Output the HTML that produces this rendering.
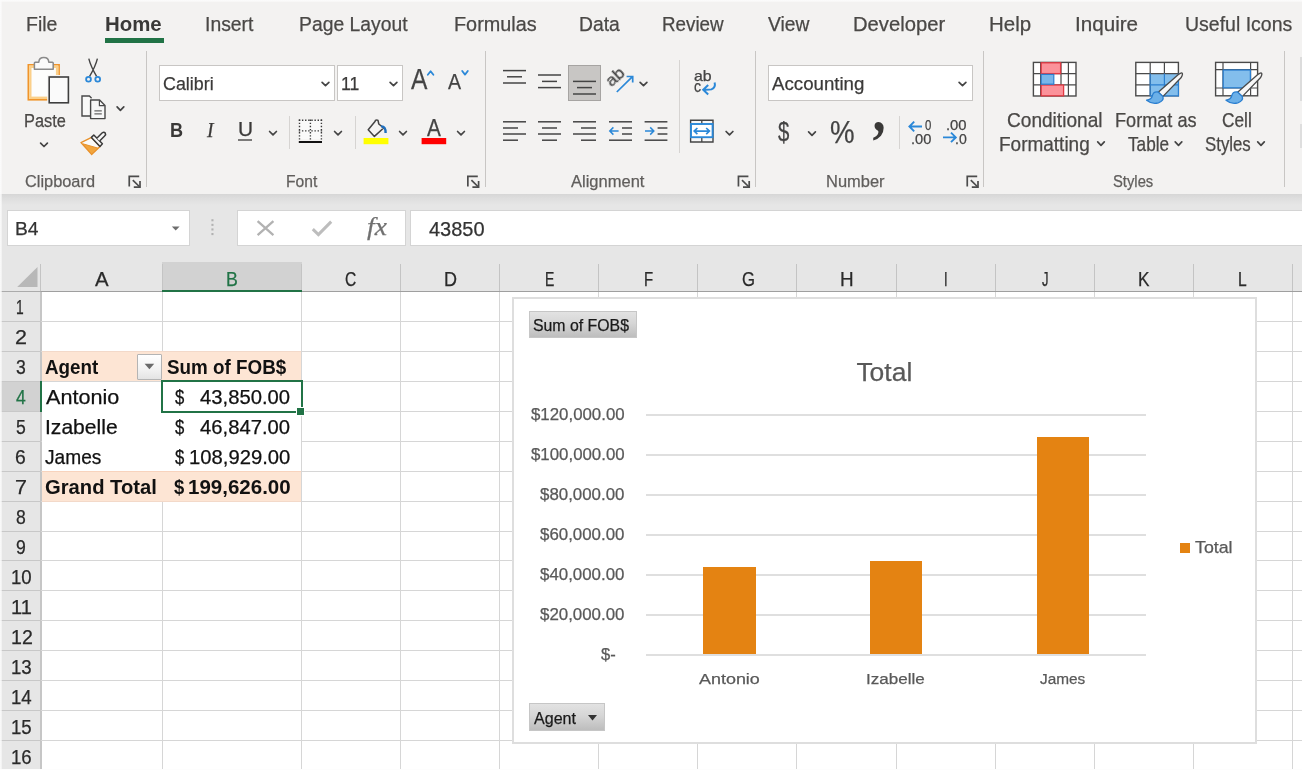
<!DOCTYPE html>
<html lang="en"><head><meta charset="utf-8"><title>Excel - PivotChart</title>
<style>
html,body{margin:0;padding:0}
body{width:1302px;height:770px;position:relative;overflow:hidden;background:#fff;font-family:"Liberation Sans",sans-serif}
div,span,svg{position:absolute;box-sizing:border-box}
.t{line-height:1;white-space:pre;transform-origin:0 0;-webkit-text-stroke:0.25px currentColor}
#ribbon{left:0;top:0;width:1302px;height:194px;background:#f3f2f1}
#txt{left:0;top:0;width:1302px;height:770px;will-change:transform}
#rshadow{left:0;top:194px;width:1302px;height:11px;background:linear-gradient(#d6d6d6,#dedede 40%,#e6e6e6)}
#fbar{left:0;top:205px;width:1302px;height:57px;background:#e6e6e6}
.gsep{width:1px;top:51px;height:136px;background:#c8c6c4}
.isep{width:1px;background:#d6d4d2}
.box{background:#fff;border:1px solid #c8c6c4}
.fbox{background:#fff;border:1px solid #d4d4d4}
#hdr{left:0;top:262px;width:1302px;height:29px;background:#e6e6e6}
#rowhdr{left:0;top:291px;width:41px;height:479px;background:#e6e6e6}
.vl{width:1px;background:#d6d6d6}
.hl{height:1px;background:#d6d6d6}
.hvl{width:1px;background:#c4c4c4;top:264px;height:27px}
.rhl{height:1px;background:#c8c8c8;left:0;width:41px}
#chart{left:512px;top:297px;width:745px;height:447px;background:#fff;border:2px solid #dedede}
.pbtn{background:linear-gradient(#e2e2e2,#d6d6d6 45%,#bdbdbd);border:1px solid #c6c6c6}
.bar{background:#e48312}
.cgl{height:2px;background:#dfdfdf;left:646px;width:500.4px}

</style></head>
<body>
<div id="ribbon"></div>
<div id="rshadow"></div>
<div id="fbar"></div>
<div style="left:0;top:0;width:1302px;height:2px;background:linear-gradient(#fcfcfc,#f7f6f5)"></div>
<div style="left:0;top:0;width:2px;height:770px;background:linear-gradient(90deg,#fbfbfb,rgba(250,250,250,0.5));z-index:5"></div>
<!-- active tab underline -->
<div style="left:104.5px;top:37.6px;width:59px;height:5.2px;background:#217346"></div>
<!-- group separators -->
<div class="gsep" style="left:146px"></div>
<div class="gsep" style="left:485px"></div>
<div class="gsep" style="left:755px"></div>
<div class="gsep" style="left:983px"></div>
<div class="gsep" style="left:1284px"></div>
<!-- inner separators -->
<div class="isep" style="left:289px;top:116px;height:33px"></div>
<div class="isep" style="left:355px;top:116px;height:33px"></div>
<div class="isep" style="left:679px;top:60px;height:93px"></div>
<div class="isep" style="left:899px;top:116px;height:33px"></div>
<!-- combo boxes -->
<div class="box" style="left:159px;top:65px;width:176px;height:36px"></div>
<div class="box" style="left:337px;top:65px;width:66px;height:36px"></div>
<div class="box" style="left:768px;top:65px;width:205px;height:36px"></div>
<!-- selected bottom-align button -->
<div style="left:568px;top:65px;width:33px;height:36px;background:#c8c6c4;border:1px solid #a6a4a2"></div>
<!-- formula bar boxes -->
<div class="fbox" style="left:7px;top:210px;width:183px;height:36px"></div>
<div class="fbox" style="left:237px;top:210px;width:169px;height:36px"></div>
<div class="fbox" style="left:410px;top:210px;width:900px;height:36px"></div>
<span class="t" style="will-change:transform;left:612.4px;top:87.6px;font-size:17.4px;color:#444;transform:rotate(-42deg) translate(0,-0.85em)">ab</span>
<div style="left:1300px;top:57px;width:2px;height:44px;background:#dcdcdc"></div>
<div style="left:1300px;top:124px;width:2px;height:24px;background:#dedede"></div>

<div id="hdr"></div>
<div id="rowhdr"></div>
<div style="left:162px;top:262px;width:140px;height:29px;background:#d2d2d2"></div>
<div style="left:0;top:382px;width:41px;height:29px;background:#d2d2d2"></div>
<div style="left:0;top:291px;width:1302px;height:1px;background:#ababab"></div>
<div style="left:41px;top:291px;width:1261px;height:1px;background:#9f9f9f"></div>
<div class="hvl" style="left:40px"></div>
<div class="hvl" style="left:162px"></div>
<div class="hvl" style="left:301px"></div>
<div class="hvl" style="left:400px"></div>
<div class="hvl" style="left:499px"></div>
<div class="hvl" style="left:598px"></div>
<div class="hvl" style="left:697px"></div>
<div class="hvl" style="left:796px"></div>
<div class="hvl" style="left:896px"></div>
<div class="hvl" style="left:995px"></div>
<div class="hvl" style="left:1094px"></div>
<div class="hvl" style="left:1193px"></div>
<div class="hvl" style="left:1292px"></div>
<div style="left:40px;top:292px;width:2px;height:478px;background:#c6c6c6"></div>
<div style="left:42px;top:352px;width:260px;height:29px;background:#fde5d4"></div>
<div style="left:42px;top:471px;width:260px;height:30px;background:#fde5d4"></div>
<div class="vl" style="left:162px;top:292px;height:478px"></div>
<div class="vl" style="left:301px;top:292px;height:478px"></div>
<div class="vl" style="left:400px;top:292px;height:478px"></div>
<div class="vl" style="left:499px;top:292px;height:478px"></div>
<div class="vl" style="left:598px;top:292px;height:478px"></div>
<div class="vl" style="left:697px;top:292px;height:478px"></div>
<div class="vl" style="left:796px;top:292px;height:478px"></div>
<div class="vl" style="left:896px;top:292px;height:478px"></div>
<div class="vl" style="left:995px;top:292px;height:478px"></div>
<div class="vl" style="left:1094px;top:292px;height:478px"></div>
<div class="vl" style="left:1193px;top:292px;height:478px"></div>
<div class="vl" style="left:1292px;top:292px;height:478px"></div>
<div class="hl" style="left:41px;top:321px;width:1261px"></div>
<div class="rhl" style="top:321px"></div>
<div class="hl" style="left:41px;top:351px;width:1261px"></div>
<div class="rhl" style="top:351px"></div>
<div class="hl" style="left:41px;top:381px;width:1261px"></div>
<div class="rhl" style="top:381px"></div>
<div class="hl" style="left:41px;top:411px;width:1261px"></div>
<div class="rhl" style="top:411px"></div>
<div class="hl" style="left:41px;top:441px;width:1261px"></div>
<div class="rhl" style="top:441px"></div>
<div class="hl" style="left:41px;top:471px;width:1261px"></div>
<div class="rhl" style="top:471px"></div>
<div class="hl" style="left:41px;top:501px;width:1261px"></div>
<div class="rhl" style="top:501px"></div>
<div class="hl" style="left:41px;top:531px;width:1261px"></div>
<div class="rhl" style="top:531px"></div>
<div class="hl" style="left:41px;top:560px;width:1261px"></div>
<div class="rhl" style="top:560px"></div>
<div class="hl" style="left:41px;top:590px;width:1261px"></div>
<div class="rhl" style="top:590px"></div>
<div class="hl" style="left:41px;top:620px;width:1261px"></div>
<div class="rhl" style="top:620px"></div>
<div class="hl" style="left:41px;top:650px;width:1261px"></div>
<div class="rhl" style="top:650px"></div>
<div class="hl" style="left:41px;top:680px;width:1261px"></div>
<div class="rhl" style="top:680px"></div>
<div class="hl" style="left:41px;top:710px;width:1261px"></div>
<div class="rhl" style="top:710px"></div>
<div class="hl" style="left:41px;top:740px;width:1261px"></div>
<div class="rhl" style="top:740px"></div>
<div class="hl" style="left:41px;top:770px;width:1261px"></div>
<div class="rhl" style="top:770px"></div>
<div style="left:42px;top:352px;width:259px;height:29px;background:#fde5d4"></div>
<div style="left:42px;top:472px;width:259px;height:29px;background:#fde5d4"></div>
<div style="left:42px;top:471px;width:259px;height:1px;background:#f8d3bd"></div>
<div style="left:42px;top:351px;width:259px;height:1px;background:#f3d9c9"></div>
<div style="left:42px;top:501px;width:259px;height:1px;background:#f3d9c9"></div>
<div style="left:42px;top:382px;width:259px;height:89px;background:#fff"></div>
<div style="left:162px;top:289.6px;width:140px;height:2px;background:#217346"></div>
<div style="left:39.6px;top:381px;width:2px;height:31px;background:#217346"></div>
<div style="left:137px;top:354px;width:25px;height:26px;background:linear-gradient(#ffffff,#f2f2f2 60%,#e4e4e4);border:1px solid #b4b4b4;border-radius:1px"></div>
<svg style="left:144px;top:363px" width="11" height="7" viewBox="0 0 11 7"><path d="M0.6 0.8h9.6l-4.8 5.4z" fill="#6a6a6a"/></svg>
<div style="left:161px;top:380px;width:142.4px;height:33px;border:2px solid #217346"></div>
<div style="left:296px;top:407px;width:9px;height:9px;background:#fff"></div>
<div style="left:297.4px;top:408.4px;width:6.4px;height:6.4px;background:#217346"></div>
<svg style="left:16px;top:266px" width="23" height="22" viewBox="0 0 23 22"><path d="M21.5 1v20H1.2z" fill="#b8b8b8"/></svg>
<div id="chart"></div>
<div class="pbtn" style="left:529px;top:310.5px;width:107.5px;height:27.5px"></div>
<div class="pbtn" style="left:529px;top:703px;width:76px;height:27.6px"></div>
<svg style="left:587px;top:714px" width="11" height="7" viewBox="0 0 11 7"><path d="M1 1h9l-4.5 5.4z" fill="#333"/></svg>
<div class="cgl" style="top:414.0px"></div>
<div class="cgl" style="top:454.0px"></div>
<div class="cgl" style="top:494.0px"></div>
<div class="cgl" style="top:534.0px"></div>
<div class="cgl" style="top:574.0px"></div>
<div class="cgl" style="top:614.0px"></div>
<div class="cgl" style="top:654.0px"></div>
<div class="bar" style="left:703.0px;top:566.7px;width:52.6px;height:87.7px"></div>
<div class="bar" style="left:869.7px;top:560.7px;width:52.6px;height:93.7px"></div>
<div class="bar" style="left:1036.6px;top:436.5px;width:52.6px;height:217.9px"></div>
<div class="bar" style="left:1179.6px;top:542.6px;width:10.4px;height:10.4px"></div>
<div style="left:0;top:769px;width:1302px;height:1px;background:#fdfdfd;z-index:6"></div>
<svg style="left:0;top:0" width="1302" height="770" viewBox="0 0 1302 770">
<path d="M40.6 143.1L44.0 146.5L47.4 143.1" fill="none" stroke="#444" stroke-width="1.7" stroke-linecap="round" stroke-linejoin="round"/>
<path d="M117.1 106.9L120.4 110.3L123.8 106.9" fill="none" stroke="#444" stroke-width="1.7" stroke-linecap="round" stroke-linejoin="round"/>
<path d="M322.1 82.3L325.5 85.7L328.9 82.3" fill="none" stroke="#444" stroke-width="1.7" stroke-linecap="round" stroke-linejoin="round"/>
<path d="M390.1 82.3L393.5 85.7L396.9 82.3" fill="none" stroke="#444" stroke-width="1.7" stroke-linecap="round" stroke-linejoin="round"/>
<path d="M269.6 131.5L273.0 134.9L276.4 131.5" fill="none" stroke="#444" stroke-width="1.7" stroke-linecap="round" stroke-linejoin="round"/>
<path d="M334.6 131.5L338.0 134.9L341.4 131.5" fill="none" stroke="#444" stroke-width="1.7" stroke-linecap="round" stroke-linejoin="round"/>
<path d="M399.6 131.5L403.0 134.9L406.4 131.5" fill="none" stroke="#444" stroke-width="1.7" stroke-linecap="round" stroke-linejoin="round"/>
<path d="M457.6 131.5L461.0 134.9L464.4 131.5" fill="none" stroke="#444" stroke-width="1.7" stroke-linecap="round" stroke-linejoin="round"/>
<path d="M640.1 82.3L643.5 85.7L646.9 82.3" fill="none" stroke="#444" stroke-width="1.7" stroke-linecap="round" stroke-linejoin="round"/>
<path d="M726.1 131.5L729.5 134.9L732.9 131.5" fill="none" stroke="#444" stroke-width="1.7" stroke-linecap="round" stroke-linejoin="round"/>
<path d="M959.1 82.3L962.5 85.7L965.9 82.3" fill="none" stroke="#444" stroke-width="1.7" stroke-linecap="round" stroke-linejoin="round"/>
<path d="M808.6 131.9L812.0 135.3L815.4 131.9" fill="none" stroke="#444" stroke-width="1.7" stroke-linecap="round" stroke-linejoin="round"/>
<path d="M1097.7 141.9L1101.0 145.3L1104.3 141.9" fill="none" stroke="#444" stroke-width="1.7" stroke-linecap="round" stroke-linejoin="round"/>
<path d="M1175.2 141.9L1178.5 145.3L1181.8 141.9" fill="none" stroke="#444" stroke-width="1.7" stroke-linecap="round" stroke-linejoin="round"/>
<path d="M1257.7 141.9L1261.0 145.3L1264.3 141.9" fill="none" stroke="#444" stroke-width="1.7" stroke-linecap="round" stroke-linejoin="round"/>
<g transform="translate(128.4,175.6)" fill="none" stroke="#4c4c4c" stroke-width="1.7"><path d="M0.85 10.8V0.85H10.8"/><path d="M4.4 4.6L11.4 11.4"/><path d="M11.6 5.4V11.6H5.4"/></g>
<g transform="translate(467,175.6)" fill="none" stroke="#4c4c4c" stroke-width="1.7"><path d="M0.85 10.8V0.85H10.8"/><path d="M4.4 4.6L11.4 11.4"/><path d="M11.6 5.4V11.6H5.4"/></g>
<g transform="translate(737.6,175.6)" fill="none" stroke="#4c4c4c" stroke-width="1.7"><path d="M0.85 10.8V0.85H10.8"/><path d="M4.4 4.6L11.4 11.4"/><path d="M11.6 5.4V11.6H5.4"/></g>
<g transform="translate(966.4,175.6)" fill="none" stroke="#4c4c4c" stroke-width="1.7"><path d="M0.85 10.8V0.85H10.8"/><path d="M4.4 4.6L11.4 11.4"/><path d="M11.6 5.4V11.6H5.4"/></g>
<rect x="28.3" y="64.8" width="30.8" height="35" fill="#fdfdfc" stroke="#f0942a" stroke-width="1.6"/>
<rect x="30.3" y="66.8" width="26.8" height="31" fill="none" stroke="#fbd08a" stroke-width="2.4"/>
<path d="M34.4 69.2V63Q34.4 62.2 35.2 62.2H38.8Q39 57.6 43.8 57.6Q48.6 57.6 48.8 62.2H52.4Q53.2 62.2 53.2 63V69.2Z" fill="#fafafa" stroke="#8a8a8a" stroke-width="1.5" stroke-linejoin="round"/>
<rect x="47.2" y="75" width="23.2" height="29.6" fill="#f6f5f4"/>
<rect x="49.2" y="77" width="19.2" height="25.8" fill="#fafafa" stroke="#3e3e3e" stroke-width="1.6"/>
<path d="M88.8 58.6Q90.6 66 96.6 76.4M97.4 58.6Q95.6 66 89.6 76.4" stroke="#444" stroke-width="1.4" fill="none"/>
<circle cx="88.5" cy="79.2" r="2.4" fill="#f3f2f1" stroke="#2b88d8" stroke-width="1.8"/><circle cx="97.7" cy="79.2" r="2.4" fill="#f3f2f1" stroke="#2b88d8" stroke-width="1.8"/>
<path d="M90 116H82V96H89.4L91.6 98.2V116Z" fill="#f9f9f8" stroke="none"/><path d="M90 116H82V96H89.4L91.6 98.2" fill="none" stroke="#484848" stroke-width="1.4"/>
<path d="M90.6 100H99.6L105 105.4V118.6H90.6Z" fill="#f7f7f7" stroke="#484848" stroke-width="1.4" stroke-linejoin="round"/>
<path d="M99.4 100.2V105.6H104.8" fill="none" stroke="#484848" stroke-width="1.2"/>
<path d="M94.4 110.8H101.8M94.4 113.8H101.8" stroke="#666" stroke-width="1.2"/>
<path d="M81 142.6L91.6 137.4L100 146.4L91.6 154.4Z" fill="#fbfaf8" stroke="#e8912b" stroke-width="1.4" stroke-linejoin="round"/>
<path d="M82.8 143.8L98.2 148.2L91.6 154.2Z" fill="#f2a53c" stroke="#e8912b" stroke-width="1"/>
<path d="M91.4 137.4L93.8 135L102.4 143.8L100 146.4Z" fill="#f7f7f7" stroke="#3a3a3a" stroke-width="1.5" stroke-linejoin="round"/>
<path d="M96.8 138.2L102 133Q104 131.6 105.2 133Q106.2 134.6 104.6 136L99.6 141" fill="#f7f7f7" stroke="#3a3a3a" stroke-width="1.5"/>
<path d="M427.8 74.8L430.6 71.2L433.4 74.8" fill="none" stroke="#2b88d8" stroke-width="1.8" stroke-linecap="round" stroke-linejoin="round"/>
<path d="M462.2 71.0L465.0 74.6L467.8 71.0" fill="none" stroke="#2b88d8" stroke-width="1.8" stroke-linecap="round" stroke-linejoin="round"/>
<path d="M238 140H252" stroke="#3a3938" stroke-width="1.3" fill="none"/>
<rect x="299.4" y="120" width="22" height="19.4" fill="#fafafa"/>
<g stroke="#3a3a3a" stroke-width="1.4" stroke-dasharray="1.4 1.73" fill="none"><path d="M298.8 120.2H322.2"/><path d="M298.8 130.9H322.2"/><path d="M299.5 119.5V139.6"/><path d="M321.4 119.5V139.6"/><path d="M310.4 119.5V139.6"/></g>
<path d="M298.8 142H322" stroke="#111" stroke-width="2"/>
<rect x="363.6" y="138" width="24.8" height="6.2" fill="#ffff00"/>
<path d="M368.2 129.8L375 121.6L375.4 120.4Q376.8 119.4 378 120.4L378.8 124L383.6 128L374.4 136.4Z" fill="#f6f5f4" stroke="#444" stroke-width="1.5" stroke-linejoin="round"/>
<path d="M381 126.4Q385.8 126 385.6 133" fill="none" stroke="#1e6fbf" stroke-width="2.4"/>
<rect x="421.6" y="138" width="24.6" height="6.2" fill="#ff0000"/>
<path d="M503 70.6H526" stroke="#444" stroke-width="1.5" fill="none"/>
<path d="M507 76.8H522" stroke="#444" stroke-width="1.5" fill="none"/>
<path d="M503 83H526" stroke="#444" stroke-width="1.5" fill="none"/>
<path d="M538 75H561" stroke="#444" stroke-width="1.5" fill="none"/>
<path d="M542 81.4H557" stroke="#444" stroke-width="1.5" fill="none"/>
<path d="M538 87.6H561" stroke="#444" stroke-width="1.5" fill="none"/>
<path d="M573 81.4H596" stroke="#444" stroke-width="1.5" fill="none"/>
<path d="M577 87.6H592" stroke="#444" stroke-width="1.5" fill="none"/>
<path d="M573 94H596" stroke="#444" stroke-width="1.5" fill="none"/>
<path d="M503 121.8H526" stroke="#444" stroke-width="1.5" fill="none"/>
<path d="M503 128H518" stroke="#444" stroke-width="1.5" fill="none"/>
<path d="M503 134H526" stroke="#444" stroke-width="1.5" fill="none"/>
<path d="M503 140.2H518" stroke="#444" stroke-width="1.5" fill="none"/>
<path d="M538 121.8H561" stroke="#444" stroke-width="1.5" fill="none"/>
<path d="M542 128H557" stroke="#444" stroke-width="1.5" fill="none"/>
<path d="M538 134H561" stroke="#444" stroke-width="1.5" fill="none"/>
<path d="M542 140.2H557" stroke="#444" stroke-width="1.5" fill="none"/>
<path d="M573 121.8H596" stroke="#444" stroke-width="1.5" fill="none"/>
<path d="M581 128H596" stroke="#444" stroke-width="1.5" fill="none"/>
<path d="M573 134H596" stroke="#444" stroke-width="1.5" fill="none"/>
<path d="M581 140.2H596" stroke="#444" stroke-width="1.5" fill="none"/>
<path d="M609 121.8H632" stroke="#444" stroke-width="1.5" fill="none"/>
<path d="M609 140.2H632" stroke="#444" stroke-width="1.5" fill="none"/>
<path d="M622 128H632" stroke="#444" stroke-width="1.5" fill="none"/>
<path d="M622 134H632" stroke="#444" stroke-width="1.5" fill="none"/>
<path d="M618.6 131H609.8M613.4 127.4L609.8 131L613.4 134.6" fill="none" stroke="#2b88d8" stroke-width="1.5"/>
<path d="M644.6 121.8H667.4" stroke="#444" stroke-width="1.5" fill="none"/>
<path d="M644.6 140.2H667.4" stroke="#444" stroke-width="1.5" fill="none"/>
<path d="M657.6 128H667.4" stroke="#444" stroke-width="1.5" fill="none"/>
<path d="M657.6 134H667.4" stroke="#444" stroke-width="1.5" fill="none"/>
<path d="M645 131H653.8M650.2 127.4L653.8 131L650.2 134.6" fill="none" stroke="#2b88d8" stroke-width="1.5"/>
<path d="M616.8 92L632.2 76.9M626.6 76.5H632.7V82.4" fill="none" stroke="#2b88d8" stroke-width="1.7"/>
<path d="M714.6 82.6Q716 87.6 711.4 89.4Q709.6 89.9 703.6 89.8M708.2 85L703.2 89.8L708.2 94.4" fill="none" stroke="#2b88d8" stroke-width="2"/>
<path d="M690.6 120.2H713V142H690.6Z" fill="#f7f7f7" stroke="#444" stroke-width="1.4"/>
<path d="M701.8 120.2V124M701.8 137.2V142" stroke="#444" stroke-width="1.3"/>
<rect x="691" y="124" width="21.6" height="13.2" fill="#fff" stroke="#2b88d8" stroke-width="1.9"/>
<path d="M694.4 131.1H709.2M697.4 128L694.2 131.1L697.4 134.2M706.2 128L709.4 131.1L706.2 134.2" fill="none" stroke="#2b88d8" stroke-width="1.7"/>
<path d="M922 126.5H909.6M914.2 121.7L909.4 126.5L914.2 131.3" fill="none" stroke="#2b88d8" stroke-width="1.9"/>
<path d="M943 137.4H955.6M951 132.6L955.8 137.4L951 142.2" fill="none" stroke="#2b88d8" stroke-width="1.9"/>
<rect x="1033.4" y="62.4" width="42.6" height="33.6" fill="#fff" stroke="#4a4a4a" stroke-width="1.4"/>
<path d="M1033.4 73.6H1076M1033.4 84.8H1076M1040.6 62.4V96M1061 62.4V96M1068.4 62.4V96" stroke="#4a4a4a" stroke-width="1.2" fill="none"/>
<rect x="1041.2" y="62.8" width="19.4" height="10.8" fill="#fb929a" stroke="#e23a44" stroke-width="1.3"/>
<rect x="1041.2" y="85" width="22.4" height="10.8" fill="#fb929a" stroke="#e23a44" stroke-width="1.3"/>
<rect x="1041.2" y="74.4" width="12.6" height="9.8" fill="#78b6ea" stroke="#2b7fd0" stroke-width="1.2"/>
<rect x="1135.8" y="62.4" width="42.6" height="33.4" fill="#fff" stroke="#4a4a4a" stroke-width="1.4"/>
<rect x="1150.2" y="73.6" width="28.2" height="22.2" fill="#83beec"/>
<path d="M1135.8 73.6H1178.4M1135.8 84.8H1150.2M1150.2 62.4V95.8M1164.4 62.4V73.6" stroke="#4a4a4a" stroke-width="1.2" fill="none"/>
<path d="M1150.2 84.8H1178.4M1164.4 73.6V95.8M1150.2 73.6V95.8H1178.4V73.6" stroke="#2b7fd0" stroke-width="1.2" fill="none"/>
<g transform="translate(0,0)"><path d="M1158.2 92.2L1178.4 74.4Q1181.6 72.2 1182.3 73.3Q1183 74.6 1181 77.8L1162.8 96.6Z" fill="#f7f7f7" stroke="#4a4a4a" stroke-width="1.3" stroke-linejoin="round"/><path d="M1158.2 92Q1153.4 91.2 1152.4 95.6Q1151.6 99.4 1146.6 100.2Q1152 104.6 1158.4 102.8Q1164.2 100.8 1162.9 96.5Z" fill="#6cb0e8" stroke="#2b7fd0" stroke-width="1.3" stroke-linejoin="round"/></g>
<rect x="1215.6" y="62.4" width="42" height="33.4" fill="#fff" stroke="#4a4a4a" stroke-width="1.4"/>
<path d="M1215.6 69.6H1257.6M1215.6 88H1257.6M1223 62.4V95.8M1250.6 62.4V95.8" stroke="#4a4a4a" stroke-width="1.2" fill="none"/>
<rect x="1223.2" y="70" width="27.2" height="17.8" fill="#83beec" stroke="#2b7fd0" stroke-width="1.3"/>
<g transform="translate(79.4,0)"><path d="M1158.2 92.2L1178.4 74.4Q1181.6 72.2 1182.3 73.3Q1183 74.6 1181 77.8L1162.8 96.6Z" fill="#f7f7f7" stroke="#4a4a4a" stroke-width="1.3" stroke-linejoin="round"/><path d="M1158.2 92Q1153.4 91.2 1152.4 95.6Q1151.6 99.4 1146.6 100.2Q1152 104.6 1158.4 102.8Q1164.2 100.8 1162.9 96.5Z" fill="#6cb0e8" stroke="#2b7fd0" stroke-width="1.3" stroke-linejoin="round"/></g>
<path d="M171.8 226.4H179.6L175.7 230.6Z" fill="#6e6e6e"/>
<rect x="211.4" y="219.2" width="2.1" height="2.1" fill="#b2b2b2"/>
<rect x="211.4" y="223.8" width="2.1" height="2.1" fill="#b2b2b2"/>
<rect x="211.4" y="228.4" width="2.1" height="2.1" fill="#b2b2b2"/>
<rect x="211.4" y="233" width="2.1" height="2.1" fill="#b2b2b2"/>
<path d="M257.6 221.2L273.4 235.2M273.4 221.2L257.6 235.2" stroke="#b2b2b2" stroke-width="2.3" fill="none"/>
<path d="M312.8 229.2L318.4 234.6L331.2 221.6" stroke="#bdbdbd" stroke-width="3" fill="none"/>
</svg>
<div id="txt">
<span class="t" style='left:25.84px;top:13.72px;font-size:20.27px;color:#4a4846;transform:scaleX(0.9623)'>File</span>
<span class="t" style='left:104.59px;top:13.72px;font-size:20.27px;color:#3a3938;transform:scaleX(1.0067);font-weight:700;-webkit-text-stroke:0'>Home</span>
<span class="t" style='left:204.85px;top:13.72px;font-size:20.27px;color:#4a4846;transform:scaleX(0.9550)'>Insert</span>
<span class="t" style='left:299.35px;top:13.72px;font-size:20.27px;color:#4a4846;transform:scaleX(0.9534)'>Page Layout</span>
<span class="t" style='left:453.52px;top:13.72px;font-size:20.27px;color:#4a4846;transform:scaleX(0.9781)'>Formulas</span>
<span class="t" style='left:578.55px;top:13.72px;font-size:20.27px;color:#4a4846;transform:scaleX(0.9521)'>Data</span>
<span class="t" style='left:662.07px;top:13.72px;font-size:20.27px;color:#4a4846;transform:scaleX(0.9269)'>Review</span>
<span class="t" style='left:768.30px;top:13.72px;font-size:20.27px;color:#4a4846;transform:scaleX(0.9494)'>View</span>
<span class="t" style='left:853.20px;top:13.72px;font-size:20.27px;color:#4a4846;transform:scaleX(0.9976)'>Developer</span>
<span class="t" style='left:989.19px;top:13.72px;font-size:20.27px;color:#4a4846;transform:scaleX(1.0097)'>Help</span>
<span class="t" style='left:1075.18px;top:13.72px;font-size:20.27px;color:#4a4846;transform:scaleX(1.0182)'>Inquire</span>
<span class="t" style='left:1184.84px;top:13.72px;font-size:20.27px;color:#4a4846;transform:scaleX(0.9622)'>Useful Icons</span>
<span class="t" style='left:25.20px;top:174.05px;font-size:16.59px;color:#605e5c;transform:scaleX(0.9867)'>Clipboard</span>
<span class="t" style='left:286.36px;top:174.05px;font-size:16.59px;color:#605e5c;transform:scaleX(0.9427)'>Font</span>
<span class="t" style='left:571.20px;top:174.05px;font-size:16.59px;color:#605e5c;transform:scaleX(0.9958)'>Alignment</span>
<span class="t" style='left:826.41px;top:174.05px;font-size:16.59px;color:#605e5c;transform:scaleX(0.9924)'>Number</span>
<span class="t" style='left:1113.00px;top:174.05px;font-size:16.59px;color:#605e5c;transform:scaleX(0.8918)'>Styles</span>
<span class="t" style='left:23.52px;top:111.56px;font-size:18.69px;color:#4a4846;transform:scaleX(0.8751)'>Paste</span>
<span class="t" style='left:163.00px;top:74.96px;font-size:18.69px;color:#3b3a39;transform:scaleX(0.9554)'>Calibri</span>
<span class="t" style='left:341.06px;top:74.96px;font-size:18.69px;color:#3b3a39;transform:scaleX(0.9441)'>11</span>
<span class="t" style='left:411.00px;top:64.82px;font-size:28.98px;color:#444;transform:scaleX(0.8500)'>A</span>
<span class="t" style='left:448.40px;top:71.06px;font-size:21.63px;color:#444;transform:scaleX(0.9067)'>A</span>
<span class="t" style='left:169.51px;top:120.22px;font-size:20.27px;color:#3a3938;transform:scaleX(0.8923);font-weight:700;-webkit-text-stroke:0'>B</span>
<span class="t" style='left:207.36px;top:120.23px;font-size:20.5px;color:#3a3938;transform:scaleX(0.9556);font-style:italic;font-family:"Liberation Serif", serif'>I</span>
<span class="t" style='left:237.53px;top:120.45px;font-size:19.53px;color:#3a3938;transform:scaleX(1.0667)'>U</span>
<span class="t" style='left:427.00px;top:116.81px;font-size:23.1px;color:#444;transform:scaleX(0.9000)'>A</span>
<span class="t" style='left:772.00px;top:74.96px;font-size:18.69px;color:#3b3a39;transform:scaleX(0.9993)'>Accounting</span>
<span class="t" style='left:778.40px;top:117.84px;font-size:27.3px;color:#444;transform:scaleX(0.7467)'>$</span>
<span class="t" style='left:830.31px;top:116.72px;font-size:30.98px;color:#444;transform:scaleX(0.8923)'>%</span>
<span class="t" style='left:870.27px;top:109.77px;font-size:62px;color:#3a3938;transform:scaleX(0.8429);font-weight:700;-webkit-text-stroke:0;font-family:"Liberation Serif", serif'>’</span>
<span class="t" style='left:925.20px;top:118.11px;font-size:14.28px;color:#444;transform:scaleX(0.8000)'>0</span>
<span class="t" style='left:911.17px;top:131.51px;font-size:14.28px;color:#444;transform:scaleX(1.0266)'>.00</span>
<span class="t" style='left:946.36px;top:118.11px;font-size:14.28px;color:#444;transform:scaleX(1.0372)'>.00</span>
<span class="t" style='left:955.21px;top:131.51px;font-size:14.28px;color:#444;transform:scaleX(0.9851)'>.0</span>
<span class="t" style='left:693.80px;top:69.77px;font-size:13.86px;color:#444;transform:scaleX(1.1459)'>ab</span>
<span class="t" style='left:693.80px;top:79.15px;font-size:16.59px;color:#444;transform:scaleX(0.8500)'>c</span>
<span class="t" style='left:1006.80px;top:111.03px;font-size:19.32px;color:#4a4846;transform:scaleX(0.9881)'>Conditional</span>
<span class="t" style='left:999.42px;top:135.23px;font-size:19.32px;color:#4a4846;transform:scaleX(0.9828)'>Formatting</span>
<span class="t" style='left:1115.26px;top:111.03px;font-size:19.32px;color:#4a4846;transform:scaleX(0.9382)'>Format as</span>
<span class="t" style='left:1127.60px;top:135.23px;font-size:19.32px;color:#4a4846;transform:scaleX(0.8893)'>Table</span>
<span class="t" style='left:1222.00px;top:111.03px;font-size:19.32px;color:#4a4846;transform:scaleX(0.8944)'>Cell</span>
<span class="t" style='left:1204.80px;top:135.23px;font-size:19.32px;color:#4a4846;transform:scaleX(0.8703)'>Styles</span>
<span class="t" style='left:14.98px;top:219.98px;font-size:18.9px;color:#333;transform:scaleX(1.0185)'>B4</span>
<span class="t" style='left:428.80px;top:219.31px;font-size:20.16px;color:#333;transform:scaleX(0.9921)'>43850</span>
<span class="t" style='left:367.00px;top:214.87px;font-size:24.5px;color:#707070;transform:scaleX(1.1232);font-style:italic;font-family:"Liberation Serif", serif'>fx</span>
<span class="t" style='left:95.20px;top:269.85px;font-size:19.53px;color:#2a2a2a;transform:scaleX(1.0462)'>A</span>
<span class="t" style='left:226.09px;top:269.85px;font-size:19.53px;color:#217346;transform:scaleX(0.9091)'>B</span>
<span class="t" style='left:345.40px;top:269.85px;font-size:19.53px;color:#2a2a2a;transform:scaleX(0.8000)'>C</span>
<span class="t" style='left:443.58px;top:269.85px;font-size:19.53px;color:#2a2a2a;transform:scaleX(0.9231)'>D</span>
<span class="t" style='left:544.98px;top:269.85px;font-size:19.53px;color:#2a2a2a;transform:scaleX(0.7167)'>E</span>
<span class="t" style='left:643.54px;top:269.85px;font-size:19.53px;color:#2a2a2a;transform:scaleX(0.7636)'>F</span>
<span class="t" style='left:741.50px;top:269.85px;font-size:19.53px;color:#2a2a2a;transform:scaleX(0.8571)'>G</span>
<span class="t" style='left:840.23px;top:269.85px;font-size:19.53px;color:#2a2a2a;transform:scaleX(0.9667)'>H</span>
<span class="t" style='left:944.13px;top:269.85px;font-size:19.53px;color:#2a2a2a;transform:scaleX(0.6667)'>I</span>
<span class="t" style='left:1041.50px;top:269.85px;font-size:19.53px;color:#2a2a2a;transform:scaleX(0.6667)'>J</span>
<span class="t" style='left:1137.82px;top:269.85px;font-size:19.53px;color:#2a2a2a;transform:scaleX(0.8833)'>K</span>
<span class="t" style='left:1238.20px;top:269.85px;font-size:19.53px;color:#2a2a2a;transform:scaleX(0.8000)'>L</span>
<span class="t" style='left:16.40px;top:298.27px;font-size:19.74px;color:#2a2a2a;transform:scaleX(0.7000)'>1</span>
<span class="t" style='left:14.61px;top:328.23px;font-size:19.74px;color:#2a2a2a;transform:scaleX(1.0889)'>2</span>
<span class="t" style='left:15.70px;top:358.19px;font-size:19.74px;color:#2a2a2a;transform:scaleX(0.8909)'>3</span>
<span class="t" style='left:15.70px;top:388.14px;font-size:19.74px;color:#217346;transform:scaleX(0.8909)'>4</span>
<span class="t" style='left:15.70px;top:418.10px;font-size:19.74px;color:#2a2a2a;transform:scaleX(0.8909)'>5</span>
<span class="t" style='left:14.72px;top:448.06px;font-size:19.74px;color:#2a2a2a;transform:scaleX(0.9800)'>6</span>
<span class="t" style='left:14.61px;top:478.01px;font-size:19.74px;color:#2a2a2a;transform:scaleX(1.0889)'>7</span>
<span class="t" style='left:15.70px;top:507.97px;font-size:19.74px;color:#2a2a2a;transform:scaleX(0.8909)'>8</span>
<span class="t" style='left:15.70px;top:537.93px;font-size:19.74px;color:#2a2a2a;transform:scaleX(0.8909)'>9</span>
<span class="t" style='left:10.76px;top:567.88px;font-size:19.74px;color:#2a2a2a;transform:scaleX(0.9440)'>10</span>
<span class="t" style='left:10.69px;top:597.84px;font-size:19.74px;color:#2a2a2a;transform:scaleX(1.0149)'>11</span>
<span class="t" style='left:10.71px;top:627.80px;font-size:19.74px;color:#2a2a2a;transform:scaleX(0.9912)'>12</span>
<span class="t" style='left:10.76px;top:657.76px;font-size:19.74px;color:#2a2a2a;transform:scaleX(0.9440)'>13</span>
<span class="t" style='left:10.76px;top:687.71px;font-size:19.74px;color:#2a2a2a;transform:scaleX(0.9440)'>14</span>
<span class="t" style='left:10.76px;top:717.67px;font-size:19.74px;color:#2a2a2a;transform:scaleX(0.9440)'>15</span>
<span class="t" style='left:10.76px;top:747.63px;font-size:19.74px;color:#2a2a2a;transform:scaleX(0.9440)'>16</span>
<span class="t" style='left:45.20px;top:357.85px;font-size:19.53px;color:#111;transform:scaleX(0.9643);font-weight:700;-webkit-text-stroke:0'>Agent</span>
<span class="t" style='left:167.00px;top:357.85px;font-size:19.53px;color:#111;transform:scaleX(0.9649);font-weight:700;-webkit-text-stroke:0'>Sum of FOB$</span>
<span class="t" style='left:45.60px;top:387.85px;font-size:19.53px;color:#111;transform:scaleX(1.1065)'>Antonio</span>
<span class="t" style='left:44.92px;top:417.85px;font-size:19.53px;color:#111;transform:scaleX(1.0793)'>Izabelle</span>
<span class="t" style='left:45.00px;top:447.85px;font-size:19.53px;color:#111;transform:scaleX(0.9806)'>James</span>
<span class="t" style='left:45.20px;top:477.85px;font-size:19.53px;color:#111;transform:scaleX(1.0350);font-weight:700;-webkit-text-stroke:0'>Grand Total</span>
<span class="t" style='left:174.60px;top:387.85px;font-size:19.53px;color:#111;transform:scaleX(0.8545)'>$</span>
<span class="t" style='left:199.80px;top:387.85px;font-size:19.53px;color:#111;transform:scaleX(1.0372)'>43,850.00</span>
<span class="t" style='left:174.60px;top:417.85px;font-size:19.53px;color:#111;transform:scaleX(0.8545)'>$</span>
<span class="t" style='left:199.80px;top:417.85px;font-size:19.53px;color:#111;transform:scaleX(1.0372)'>46,847.00</span>
<span class="t" style='left:174.60px;top:447.85px;font-size:19.53px;color:#111;transform:scaleX(0.8545)'>$</span>
<span class="t" style='left:188.56px;top:447.85px;font-size:19.53px;color:#111;transform:scaleX(1.0370)'>108,929.00</span>
<span class="t" style='left:174.20px;top:477.85px;font-size:19.53px;color:#111;transform:scaleX(0.9455);font-weight:700;-webkit-text-stroke:0'>$</span>
<span class="t" style='left:188.15px;top:477.85px;font-size:19.53px;color:#111;transform:scaleX(1.0514);font-weight:700;-webkit-text-stroke:0'>199,626.00</span>
<span class="t" style='left:533.20px;top:317.44px;font-size:16.48px;color:#1a1a1a;transform:scaleX(0.9618)'>Sum of FOB$</span>
<span class="t" style='left:534.20px;top:710.04px;font-size:16.48px;color:#1a1a1a;transform:scaleX(0.9756)'>Agent</span>
<span class="t" style='left:856.40px;top:359.36px;font-size:26.46px;color:#595959;transform:scaleX(1.0000)'>Total</span>
<span class="t" style='left:1194.60px;top:540.17px;font-size:16.8px;color:#595959;transform:scaleX(1.0600)'>Total</span>
<span class="t" style='left:530.60px;top:406.95px;font-size:16.59px;color:#595959;transform:scaleX(1.0155)'>$120,000.00</span>
<span class="t" style='left:530.60px;top:446.95px;font-size:16.59px;color:#595959;transform:scaleX(1.0155)'>$100,000.00</span>
<span class="t" style='left:539.80px;top:486.95px;font-size:16.59px;color:#595959;transform:scaleX(1.0175)'>$80,000.00</span>
<span class="t" style='left:539.80px;top:526.95px;font-size:16.59px;color:#595959;transform:scaleX(1.0175)'>$60,000.00</span>
<span class="t" style='left:539.80px;top:566.95px;font-size:16.59px;color:#595959;transform:scaleX(1.0175)'>$40,000.00</span>
<span class="t" style='left:539.80px;top:606.95px;font-size:16.59px;color:#595959;transform:scaleX(1.0175)'>$20,000.00</span>
<span class="t" style='left:601.20px;top:646.75px;font-size:16.59px;color:#595959;transform:scaleX(0.9986)'>$-</span>
<span class="t" style='left:699.20px;top:671.42px;font-size:15.33px;color:#595959;transform:scaleX(1.1698)'>Antonio</span>
<span class="t" style='left:866.49px;top:671.42px;font-size:15.33px;color:#595959;transform:scaleX(1.1109)'>Izabelle</span>
<span class="t" style='left:1040.00px;top:671.42px;font-size:15.33px;color:#595959;transform:scaleX(1.0026)'>James</span>
</div>
</body></html>
